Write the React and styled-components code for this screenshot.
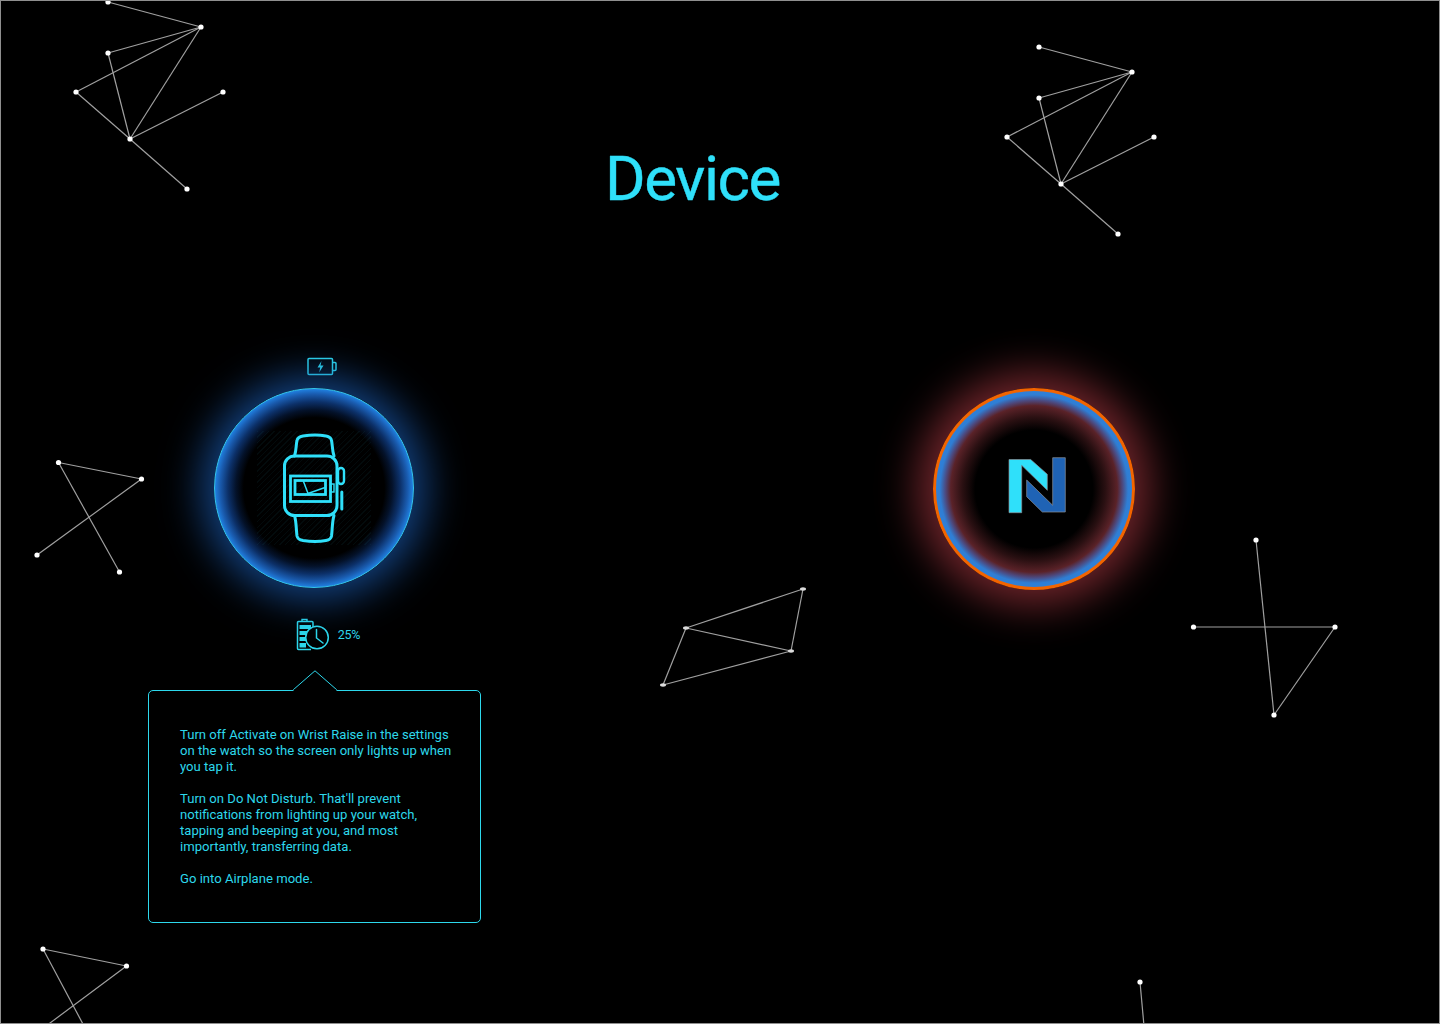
import React from "react";
import styled, { createGlobalStyle } from "styled-components";

const CYAN = "#2fe0fa";
const TEXT = "#2dd8ec";

const GlobalStyle = createGlobalStyle`
  html, body { margin: 0; padding: 0; background: #000; }
  * { box-sizing: border-box; }
`;

const Screen = styled.div`
  position: relative;
  width: 1440px;
  height: 1024px;
  overflow: hidden;
  background: #000;
  border: 1px solid #8f8f8f;
  font-family: Roboto, "Liberation Sans", sans-serif;
  color: ${TEXT};
`;

const Sky = styled.svg`
  position: absolute;
  left: -1px;
  top: -1px;
  width: 1440px;
  height: 1024px;
  pointer-events: none;
`;

const Title = styled.h1`
  margin: 0;
  padding: 141px 55px 0 0;
  height: 356px;
  text-align: center;
  font-size: 62px;
  line-height: 74px;
  font-weight: 400;
  letter-spacing: -1.4px;
  color: ${CYAN};
  -webkit-text-stroke: 0.4px ${CYAN};
`;

const Stage = styled.div`
  display: flex;
  align-items: flex-start;
  gap: 452px;
  padding-left: 147px;
`;

const LeftColumn = styled.div`
  display: flex;
  flex-direction: column;
  align-items: center;
  width: 333px;
`;

const RightColumn = styled.div`
  padding-top: 31px;
`;

const ChargeIcon = styled.svg`
  display: block;
  width: 30px;
  height: 20px;
  margin: 0 0 11px 15px;
`;

const Dial = styled.div`
  position: relative;
  display: flex;
  align-items: center;
  justify-content: center;
  flex: none;
  border-radius: 50%;
  width: ${(p) => (p.$alert ? 202 : 200)}px;
  height: ${(p) => (p.$alert ? 202 : 200)}px;
  margin-right: ${(p) => (p.$alert ? 0 : 1)}px;
  border: ${(p) => (p.$alert ? "3.5px solid #f26400" : "1.4px solid #35c6ee")};
  background: ${(p) =>
    p.$alert
      ? "radial-gradient(circle closest-side, #000 60%, #2a1012 73%, #5a2228 85%, #4c4a80 90.5%, #2f7ed4 96%, #2f80d8 100%)"
      : "radial-gradient(circle closest-side, #000 71%, #04122a 79%, #0c3068 87%, #1a5cb0 95%, #2080e0 100%)"};
  box-shadow: ${(p) =>
    p.$alert
      ? "0 0 40px 16px rgba(110, 36, 42, 1)"
      : "0 0 40px 12px rgba(26, 90, 175, 0.75)"};
`;

const Hatch = styled.div`
  position: absolute;
  inset: 42px;
  background: repeating-linear-gradient(
    135deg,
    rgba(40, 150, 170, 0.07) 0 1px,
    transparent 1px 4px
  );
`;

const DeviceIcon = styled.svg`
  position: relative;
  display: block;
  width: 68px;
  height: 116px;
`;

const LogoIcon = styled.svg`
  display: block;
  width: 68px;
  height: 68px;
`;

const Level = styled.div`
  display: flex;
  align-items: center;
  gap: 5px;
  margin: 30px 0 0 27px;
  height: 34px;
  font-size: 12.5px;
  line-height: 14px;
  font-weight: 400;
  letter-spacing: -0.2px;
`;

const LevelIcon = styled.svg`
  display: block;
  width: 37px;
  height: 34px;
`;

const TipBox = styled.div`
  position: relative;
  width: 333px;
  height: 233px;
  margin-top: 38px;
  padding: 36px 20px 0 31px;
  border: 1px solid ${TEXT};
  border-radius: 5px;
`;

const TipNotch = styled.svg`
  position: absolute;
  left: 143px;
  top: -21px;
  width: 46px;
  height: 21px;
  overflow: visible;
`;

const TipText = styled.p`
  margin: 0 0 16px;
  font-size: 13.1px;
  line-height: 16px;
  font-weight: 400;
`;

const constellations = [
  {
    nodes: [[108, 2], [201, 27], [108, 53], [76, 92], [223, 92], [130, 139], [187, 189]],
    edges: [[0, 1], [1, 2], [1, 3], [1, 5], [2, 5], [3, 5], [5, 4], [5, 6]],
  },
  {
    nodes: [[1039, 47], [1132, 72], [1039, 98], [1007, 137], [1154, 137], [1061, 184], [1118, 234]],
    edges: [[0, 1], [1, 2], [1, 3], [1, 5], [2, 5], [3, 5], [5, 4], [5, 6]],
  },
  {
    nodes: [[58.5, 462.5], [141.5, 479], [37, 555], [119.5, 572]],
    edges: [[0, 1], [1, 2], [0, 3]],
  },
  {
    nodes: [[686, 628], [803, 589], [791, 651], [663, 685]],
    edges: [[0, 1], [1, 2], [2, 0], [0, 3], [3, 2]],
    flat: true,
  },
  {
    nodes: [[1193.5, 627], [1335, 627], [1274, 715], [1256, 540]],
    edges: [[0, 1], [1, 2], [2, 3]],
  },
  {
    nodes: [[43, 949], [126.5, 966]],
    ends: [[84, 1026], [46, 1026]],
    edges: [[0, 1], [0, 2], [1, 3]],
  },
  {
    nodes: [[1140, 982]],
    ends: [[1144, 1026]],
    edges: [[0, 1]],
  },
];

const Constellation = ({ nodes, ends = [], edges, flat }) => {
  const points = [...nodes, ...ends];
  return (
    <g>
      {edges.map(([a, b]) => (
        <line
          key={`${a}-${b}`}
          x1={points[a][0]}
          y1={points[a][1]}
          x2={points[b][0]}
          y2={points[b][1]}
          stroke="#a0a0a0"
          strokeWidth="1.2"
        />
      ))}
      {nodes.map(([x, y]) => (
        <ellipse key={`${x}-${y}`} cx={x} cy={y} rx={flat ? 3 : 2.6} ry={flat ? 1.7 : 2.6} fill={flat ? "#dcdcdc" : "#fff"} />
      ))}
    </g>
  );
};

const WatchGlyph = () => (
  <DeviceIcon viewBox="280 430 68 116" fill="none" stroke={CYAN} strokeWidth="3" strokeLinejoin="round" strokeLinecap="round">
    <rect x="284.5" y="456" width="52.5" height="59.5" rx="10" />
    <path d="M294.5 456 C296.5 450 296 444 297 440.5 C297.6 437.5 300 436.5 303 436 C310 435 320 435 326 436 C329 436.5 331 437.5 331.5 440.5 C332.5 444 332 450 334 456" />
    <path d="M294.5 515.5 C296.5 522 296 529 297 536 C297.6 539 300 540 303 540.5 C310 541.5 320 541.5 326 540.5 C329 540 331 539 331.5 536 C332.5 529 332 522 334 515.5" />
    <rect x="338" y="468" width="6" height="16" rx="3" strokeWidth="2.4" />
    <path d="M341.8 492 V509" strokeWidth="3" />
    <rect x="290.5" y="476" width="40" height="25.5" strokeWidth="2.8" strokeLinejoin="miter" />
    <rect x="295" y="480.5" width="30.5" height="14" strokeWidth="2.8" strokeLinejoin="miter" />
    <rect x="331" y="484" width="3" height="8" strokeWidth="1.4" strokeLinejoin="miter" />
    <path d="M303.5 481.5 L308 493.5 L325 487.5" strokeWidth="1.5" />
  </DeviceIcon>
);

const App = () => (
  <>
    <GlobalStyle />
    <Screen>
      <Sky viewBox="0 0 1440 1024">
        {constellations.map((c) => (
          <Constellation key={c.nodes[0].join()} {...c} />
        ))}
      </Sky>
      <Title>Device</Title>
      <Stage>
        <LeftColumn>
          <ChargeIcon viewBox="0 0 30 20" fill="none" stroke={TEXT}>
            <rect x="1" y="1.5" width="24.5" height="16" rx="1" strokeWidth="1.5" />
            <path d="M25.5 5.5 h2.5 a1 1 0 0 1 1 1 v6 a1 1 0 0 1 -1 1 H25.5" strokeWidth="1.5" />
            <path d="M14.5 4 L10.5 10.5 H13.2 L12.2 15.5 L16.5 8.5 H13.5 Z" fill={TEXT} stroke="none" />
          </ChargeIcon>
          <Dial>
            <Hatch />
            <WatchGlyph />
          </Dial>
          <Level>
            <LevelIcon viewBox="0 0 37 34" fill="none" stroke={TEXT}>
              <path d="M6 3.5 V1.5 H11 V3.5" strokeWidth="1.4" />
              <path d="M15 31.5 H2.5 a1 1 0 0 1 -1 -1 V4.5 a1 1 0 0 1 1 -1 H16 a1 1 0 0 1 1 1 V9" strokeWidth="1.5" />
              <path d="M3.5 7 H15 V11 H3.5 Z M3.5 13 H12 V17 H3.5 Z M3.5 19 H10 V23 H3.5 Z M3.5 25 H10 V29.5 H3.5 Z" fill={TEXT} stroke="none" />
              <circle cx="21" cy="19.5" r="11.3" fill="#000" strokeWidth="1.5" />
              <path d="M20.5 11.5 V20 L27 25" strokeWidth="1.5" strokeLinecap="round" />
            </LevelIcon>
            <span>25%</span>
          </Level>
          <TipBox>
            <TipNotch viewBox="0 0 46 21">
              <path d="M1 20 L23 0.8 L45 20" fill="#000" stroke={TEXT} strokeWidth="1" />
              <path d="M1.5 20.5 H44.5" stroke="#000" strokeWidth="2" />
            </TipNotch>
            <TipText>
              Turn off Activate on Wrist Raise in the settings
              <br />
              on the watch so the screen only lights up when
              <br />
              you tap it.
            </TipText>
            <TipText>
              Turn on Do Not Disturb. That'll prevent
              <br />
              notifications from lighting up your watch,
              <br />
              tapping and beeping at you, and most
              <br />
              importantly, transferring data.
            </TipText>
            <TipText>Go into Airplane mode.</TipText>
          </TipBox>
        </LeftColumn>
        <RightColumn>
          <Dial $alert>
            <LogoIcon viewBox="1000 454 68 68">
              <path d="M1009 458.5 H1030.7 L1047.3 473.3 V489.3 L1021.7 464.3 V511.7 H1009 Z" fill={CYAN} stroke="#8a8f96" strokeWidth="0.7" />
              <path d="M1052.7 456.7 H1065.3 V511 H1042.3 L1026.7 495.7 V479 L1052.7 504.3 Z" fill="#1f63b5" stroke="#8a8f96" strokeWidth="0.7" />
            </LogoIcon>
          </Dial>
        </RightColumn>
      </Stage>
    </Screen>
  </>
);

export default App;
